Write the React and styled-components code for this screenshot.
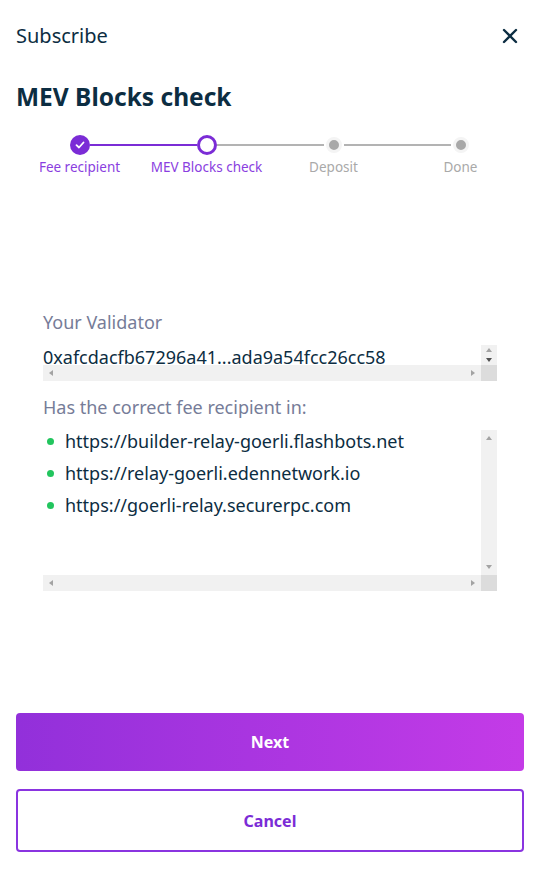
import React from "react";
import styled, { createGlobalStyle } from "styled-components";

const GlobalStyle = createGlobalStyle`
	html, body {
		margin: 0;
		padding: 0;
		background: #ffffff;
	}
	body {
		font-family: "Noto Sans", "Open Sans", sans-serif;
		color: #0c2d42;
	}
	* {
		box-sizing: border-box;
	}
`;

const steps = [
	{ label: "Fee recipient", state: "done" },
	{ label: "MEV Blocks check", state: "active" },
	{ label: "Deposit", state: "pending" },
	{ label: "Done", state: "pending" },
];

const relays = [
	"https://builder-relay-goerli.flashbots.net",
	"https://relay-goerli.edennetwork.io",
	"https://goerli-relay.securerpc.com",
];

function CloseIcon() {
	return (
		<svg width="16" height="16" viewBox="0 0 16 16" fill="none">
			<path
				d="M2 2 L14 14 M14 2 L2 14"
				stroke="#0c2d42"
				strokeWidth="2.4"
				strokeLinecap="round"
			/>
		</svg>
	);
}

function CheckIcon() {
	return (
		<svg width="10" height="10" viewBox="0 0 10 10" fill="none">
			<path
				d="M1.5 5.2 L4 7.5 L8.5 2.5"
				stroke="#ffffff"
				strokeWidth="1.8"
				strokeLinecap="round"
				strokeLinejoin="round"
			/>
		</svg>
	);
}

// classic scrollbox look: content, vertical bar, horizontal bar, corner
function ScrollFrame({ height, downActive, children }) {
	return (
		<Frame $height={height}>
			<Viewport>{children}</Viewport>
			<VBar>
				<BarButton>
					<Arrow $dir="up" />
				</BarButton>
				<BarButton>
					<Arrow $dir="down" $active={downActive} />
				</BarButton>
			</VBar>
			<HBar>
				<BarButton>
					<Arrow $dir="left" />
				</BarButton>
				<BarButton>
					<Arrow $dir="right" />
				</BarButton>
			</HBar>
			<Corner />
		</Frame>
	);
}

function App() {
	return (
		<>
			<GlobalStyle />
			<Modal>
				<Header>
					<HeaderTitle>Subscribe</HeaderTitle>
					<CloseButton aria-label="Close">
						<CloseIcon />
					</CloseButton>
				</Header>
				<Title>MEV Blocks check</Title>
				<Stepper>
					{steps.map((step, i) => (
						<Step key={step.label}>
							<Track>
								<Line
									$hidden={i === 0}
									$filled={step.state !== "pending"}
								/>
								<Marker $state={step.state}>
									{step.state === "done" && <CheckIcon />}
								</Marker>
								<Line
									$hidden={i === steps.length - 1}
									$filled={step.state === "done"}
								/>
							</Track>
							<StepLabel $state={step.state}>{step.label}</StepLabel>
						</Step>
					))}
				</Stepper>

				<Content>
					<FieldLabel>Your Validator</FieldLabel>
					<ScrollFrame height={36} downActive>
						<ValueText>0xafcdacfb67296a41...ada9a54fcc26cc58</ValueText>
					</ScrollFrame>
					<FieldLabel $spaced>Has the correct fee recipient in:</FieldLabel>
					<ScrollFrame height={161}>
						<RelayList>
							{relays.map((url) => (
								<RelayItem key={url}>
									<Dot />
									{url}
								</RelayItem>
							))}
						</RelayList>
					</ScrollFrame>
				</Content>

				<Actions>
					<PrimaryButton>Next</PrimaryButton>
					<SecondaryButton>Cancel</SecondaryButton>
				</Actions>
			</Modal>
		</>
	);
}

export default App;

const Modal = styled.div`
	width: 540px;
	height: 869px;
	padding: 0 16px;
	display: flex;
	flex-direction: column;
`;

const Header = styled.div`
	height: 72px;
	display: flex;
	align-items: center;
	justify-content: space-between;
`;

const HeaderTitle = styled.div`
	font-size: 20px;
	line-height: 28px;
	color: #0c2d42;
`;

const CloseButton = styled.button`
	border: none;
	background: none;
	padding: 0;
	margin-right: 6px;
	display: flex;
	cursor: pointer;
`;

const Title = styled.h1`
	margin: 9px 0 0;
	font-size: 24.5px;
	line-height: 32px;
	font-weight: 700;
	color: #0c2d42;
`;

const Stepper = styled.div`
	margin-top: 22px;
	display: grid;
	grid-template-columns: repeat(4, 1fr);
`;

const Step = styled.div`
	display: flex;
	flex-direction: column;
	align-items: center;
`;

const Track = styled.div`
	width: 100%;
	height: 20px;
	display: flex;
	align-items: center;
`;

const Line = styled.div`
	flex: 1;
	height: 2px;
	background: ${(p) => (p.$filled ? "#7b2cd6" : "#b3b3b3")};
	visibility: ${(p) => (p.$hidden ? "hidden" : "visible")};
`;

const Marker = styled.div`
	flex: none;
	width: 20px;
	height: 20px;
	border-radius: 50%;
	display: flex;
	align-items: center;
	justify-content: center;
	${(p) =>
		p.$state === "done" &&
		`
		background: #7b2cd6;
	`}
	${(p) =>
		p.$state === "active" &&
		`
		background: #ffffff;
		border: 3px solid #7b2cd6;
	`}
	${(p) =>
		p.$state === "pending" &&
		`
		width: 16px;
		height: 16px;
		background: #a8a8a8;
		border: 3.5px solid #f4f4f4;
		margin: 0 2px;
	`}
`;

const StepLabel = styled.div`
	margin-top: 3px;
	font-size: 13.5px;
	line-height: 18px;
	white-space: nowrap;
	color: ${(p) => (p.$state === "pending" ? "#a9a9a9" : "#8a3ee0")};
`;

const Content = styled.div`
	margin: 134px 27px 0;
	display: flex;
	flex-direction: column;
`;

const FieldLabel = styled.div`
	margin-top: ${(p) => (p.$spaced ? "14px" : "0")};
	margin-bottom: 11px;
	font-size: 18px;
	line-height: 24px;
	color: #767c98;
`;

const Frame = styled.div`
	height: ${(p) => p.$height}px;
	display: grid;
	grid-template-columns: minmax(0, 1fr) 16px;
	grid-template-rows: minmax(0, 1fr) 16px;
`;

const Viewport = styled.div`
	overflow: hidden;
	white-space: nowrap;
	min-height: 0;
`;

const VBar = styled.div`
	min-height: 0;
	background: #f1f1f1;
	display: flex;
	flex-direction: column;
	justify-content: space-between;
	overflow: hidden;
`;

const HBar = styled.div`
	background: #f1f1f1;
	display: flex;
	justify-content: space-between;
`;

const BarButton = styled.div`
	flex: 0 1 16px;
	min-width: 16px;
	min-height: 0;
	display: flex;
	align-items: center;
	justify-content: center;
	overflow: hidden;
`;

const Corner = styled.div`
	background: #dcdcdc;
`;

const Arrow = styled.span`
	width: 0;
	height: 0;
	border-style: solid;
	border-color: transparent;
	${(p) => {
		const c = p.$active ? "#505050" : "#a3a3a3";
		switch (p.$dir) {
			case "up":
				return `border-width: 0 3.5px 4px; border-bottom-color: ${c};`;
			case "down":
				return `border-width: 4px 3.5px 0; border-top-color: ${c};`;
			case "left":
				return `border-width: 3.5px 4px 3.5px 0; border-right-color: ${c};`;
			default:
				return `border-width: 3.5px 0 3.5px 4px; border-left-color: ${c};`;
		}
	}}
`;

const ValueText = styled.div`
	font-size: 18px;
	line-height: 24px;
	color: #0c2d42;
`;

const RelayList = styled.ul`
	list-style: none;
	margin: 0;
	padding: 0;
	display: flex;
	flex-direction: column;
	gap: 10px;
`;

const RelayItem = styled.li`
	display: flex;
	align-items: center;
	font-size: 18px;
	line-height: 22px;
	color: #0c2d42;
`;

const Dot = styled.span`
	flex: none;
	width: 7px;
	height: 7px;
	border-radius: 50%;
	background: #22c55e;
	margin: 0 11px 0 4px;
`;

const Actions = styled.div`
	margin-top: auto;
	margin-bottom: 17px;
	display: flex;
	flex-direction: column;
	gap: 18px;
`;

const PrimaryButton = styled.button`
	height: 58px;
	border: none;
	border-radius: 4px;
	background: linear-gradient(90deg, #9230da 0%, #c43be7 100%);
	color: #ffffff;
	font-family: inherit;
	font-size: 16px;
	font-weight: 700;
	cursor: pointer;
`;

const SecondaryButton = styled.button`
	height: 63px;
	border: 2px solid #8a34e0;
	border-radius: 4px;
	background: #ffffff;
	color: #7b2cd6;
	font-family: inherit;
	font-size: 16px;
	font-weight: 700;
	cursor: pointer;
`;
